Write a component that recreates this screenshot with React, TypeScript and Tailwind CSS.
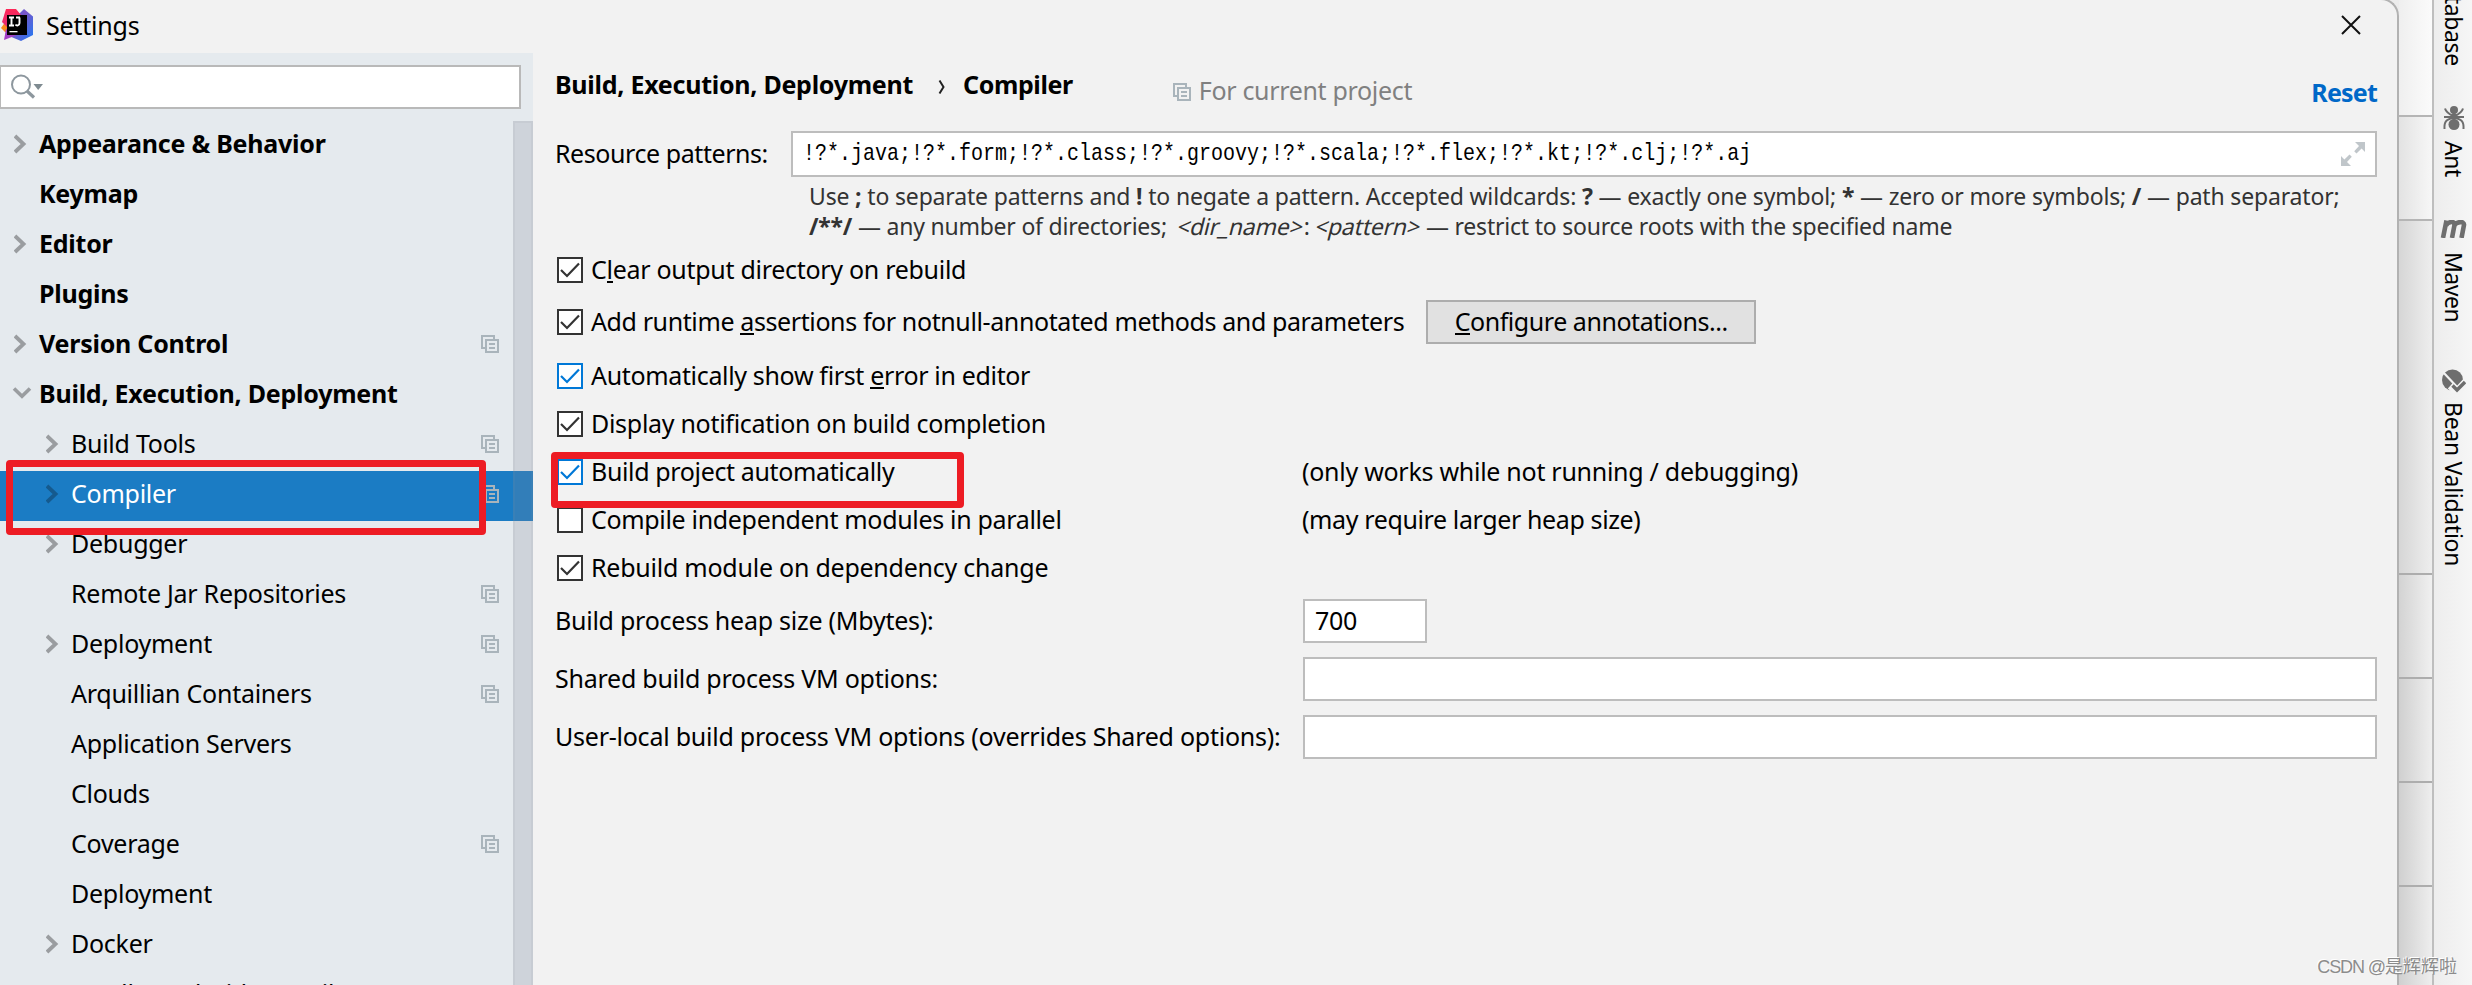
import type { ReactNode } from "react";

type TreeItem = {
  label: string;
  top?: boolean;
  arrow?: "right" | "down";
  project?: boolean;
  selected?: boolean;
};

const tree: TreeItem[] = [
  { label: "Appearance & Behavior", top: true, arrow: "right" },
  { label: "Keymap", top: true },
  { label: "Editor", top: true, arrow: "right" },
  { label: "Plugins", top: true },
  { label: "Version Control", top: true, arrow: "right", project: true },
  { label: "Build, Execution, Deployment", top: true, arrow: "down" },
  { label: "Build Tools", arrow: "right", project: true },
  { label: "Compiler", arrow: "right", project: true, selected: true },
  { label: "Debugger", arrow: "right" },
  { label: "Remote Jar Repositories", project: true },
  { label: "Deployment", arrow: "right", project: true },
  { label: "Arquillian Containers", project: true },
  { label: "Application Servers" },
  { label: "Clouds" },
  { label: "Coverage", project: true },
  { label: "Deployment" },
  { label: "Docker", arrow: "right" },
  { label: "Gradle-Android Compiler" },
];

function IdeaLogo() {
  return (
    <svg className="h-8 w-8" viewBox="0 0 32 32">
      <defs>
        <linearGradient id="blue" x1="0" y1="0" x2="1" y2="1">
          <stop offset="0" stopColor="#3f6df0" />
          <stop offset="0.4" stopColor="#7a55c8" />
          <stop offset="1" stopColor="#1c7bf5" />
        </linearGradient>
        <linearGradient id="pink" x1="0" y1="0" x2="0" y2="1">
          <stop offset="0" stopColor="#fe2857" />
          <stop offset="1" stopColor="#e02a7c" />
        </linearGradient>
      </defs>
      <path d="M23 0L32 7.500V26L20 32L8 27L17 6Z" fill="url(#blue)" />
      <path d="M0 19L5 12L8 24L4 23Z" fill="#fb8a1e" />
      <path d="M5 0H15L20 6L10 22L1 13Z" fill="url(#pink)" />
      <path d="M5 20L16 26L3 31Z" fill="#a33fc4" />
      <rect x="6" y="6" width="20" height="20" fill="#000" />
      <path d="M8 8.500H13M10.500 8.500V16M8 16.500H13M15 8.500H19M18.500 8.500V14C18.500 17 15.500 17 14.500 15.500" fill="none" stroke="#fff" strokeWidth="1.900" />
      <rect x="8.500" y="22" width="8" height="1.300" fill="#fff" />
    </svg>
  );
}

function ProjectIcon({ className }: { className?: string }) {
  return (
    <svg className={"h-[18px] w-[18px] shrink-0 " + (className ?? "")} viewBox="0 0 18 18" fill="none" stroke="#a9b4bb" strokeWidth="2">
      <path d="M4 13H1V1H13V4" />
      <path d="M5 5H17V17H5Z" />
      <path d="M8 9H14M8 13H14" />
    </svg>
  );
}

function Arrow({ dir, selected }: { dir?: "right" | "down"; selected?: boolean }) {
  if (dir === "down") {
    return (
      <svg className="-ml-0.5 -mt-[5px] h-5 w-5" viewBox="0 0 20 20" fill="none" stroke="#9a9da0" strokeWidth="3.600">
        <path d="M2 4.500L10 12.300L18 4.500" />
      </svg>
    );
  }
  if (dir === "right") {
    return (
      <svg className="-mt-[5px] h-5 w-4" viewBox="0 0 16 20" fill="none" stroke={selected ? "#155a8e" : "#9a9da0"} strokeWidth="3.800">
        <path d="M1 2L9.500 10L1 18" />
      </svg>
    );
  }
  return null;
}

function Sidebar() {
  return (
    <aside className="flex h-[932px] w-[533px] shrink-0 flex-col bg-[#e5eaee]">
      <div className="mt-3 flex h-[44px] w-[521px] shrink-0 items-center border-2 border-l border-[#b9b9b9] bg-white pl-2.5">
        <svg className="h-[26px] w-8" viewBox="0 0 32 26" fill="none">
          <circle cx="10" cy="10.500" r="9" stroke="#8d979e" strokeWidth="2" />
          <path d="M16 17L23 23.500" stroke="#8d979e" strokeWidth="3.200" />
          <path d="M22.500 10H32L27.200 16Z" fill="#7f8b91" />
        </svg>
      </div>
      <nav className="relative mt-3 flex flex-col">
        {tree.map((item, i) => (
          <div
            key={i}
            className={
              "flex h-[50px] shrink-0 items-center text-[25px] " +
              (item.selected ? "bg-[#1b7cc4] text-white " : "text-black ") +
              (item.top ? "pl-[14px] font-bold tracking-[-0.24px]" : "pl-[46px] tracking-[-0.26px]")
            }
          >
            <span className="flex w-[25px] shrink-0">
              <Arrow dir={item.arrow} selected={item.selected} />
            </span>
            <span className="-mt-1.5 grow whitespace-nowrap leading-[34px]">{item.label}</span>
            {item.project && <ProjectIcon className="-mt-1 mr-[34px]" />}
          </div>
        ))}
        <div className="absolute right-0 top-0 h-full w-5 border-2 border-b-0 border-[#8c919b]/10 bg-[#828796]/23" />
        <div className="absolute left-[6px] top-[339px] h-[75px] w-[480px] rounded-[4px] border-[7px] border-[#ed1c24]" />
      </nav>
    </aside>
  );
}

function CheckRow({ checked = true, blue, className, children }: { checked?: boolean; blue?: boolean; className: string; children: ReactNode }) {
  return (
    <div className={"flex shrink-0 items-center gap-2 pl-px " + className}>
      <span className={"flex h-[26px] w-[26px] shrink-0 items-center justify-center border-2 bg-white " + (blue ? "border-[#0078d7]" : "border-[#333333]")}>
        {checked && (
          <svg className="h-[22px] w-[22px]" viewBox="0 0 22 22" fill="none" stroke={blue ? "#0078d7" : "#333333"} strokeWidth="2.200">
            <path d="M2 11L8 17L20 4.500" />
          </svg>
        )}
      </span>
      {children}
    </div>
  );
}

function Label({ children, className = "tracking-[-0.29px]" }: { children: ReactNode; className?: string }) {
  return <span className={"-mt-0.5 whitespace-nowrap leading-[34px] " + className}>{children}</span>;
}

function Mnemonic({ children }: { children: ReactNode }) {
  return <span className="inline-block h-[31px] border-b-2 border-black align-top">{children}</span>;
}

function Main() {
  return (
    <main className="flex grow flex-col pl-[23px] text-[25px] text-black">
      <div className="flex h-[78px] shrink-0">
        <div className="mt-4 flex font-bold">
          <Label className="-ml-px w-[383px] tracking-[-0.26px]">Build, Execution, Deployment</Label>
          <svg className="mt-[10px] h-4 w-[8px]" viewBox="0 0 8 16" fill="none" stroke="#222" strokeWidth="2">
            <path d="M1.500 1.500L5.500 8L1.500 14.500" />
          </svg>
          <Label className="ml-[17px] tracking-[-0.38px]">Compiler</Label>
        </div>
        <div className="ml-[100px] mt-[22px] flex">
          <ProjectIcon className="mt-2" />
          <Label className="ml-[8px] tracking-[-0.33px] text-[#808080]">For current project</Label>
        </div>
        <div className="ml-auto mr-[20px] mt-[21px] font-bold text-[#0068c8]">
          <Label className="tracking-[-0.8px]">Reset</Label>
        </div>
      </div>

      <div className="flex h-[46px] shrink-0 items-center">
        <Label className="-ml-px w-[236px] tracking-[-0.43px]">Resource patterns:</Label>
        <div className="flex h-[46px] w-[1586px] items-center border-2 border-[#bdbdbd] bg-white pl-[10px] pr-2.5">
          <span className="grow origin-center scale-y-[1.22] whitespace-nowrap font-['Liberation_Mono',monospace] text-[20px] leading-none">
            !?*.java;!?*.form;!?*.class;!?*.groovy;!?*.scala;!?*.flex;!?*.kt;!?*.clj;!?*.aj
          </span>
          <svg className="h-6 w-6" viewBox="0 0 24 24" fill="#c0c6ca">
            <path d="M14 0H24V10L20.600 6.600L15.500 11.500L13.200 9.200L18 4Z" />
            <path d="M0 24V14L3.400 17.400L8.500 12.500L10.800 14.800L6 20L10 24Z" />
          </svg>
        </div>
      </div>

      <div className="h-[69px] shrink-0 pl-[253px] pt-[4px] text-[23px] leading-[30px] text-[#333333]">
        <p className="whitespace-nowrap tracking-[-0.17px]">
          Use <b>;</b> to separate patterns and <b>!</b> to negate a pattern. Accepted wildcards: <b>?</b> — exactly one symbol; <b>*</b> — zero or more symbols; <b>/</b> — path separator;
        </p>
        <p className="whitespace-nowrap tracking-[-0.22px]">
          <b>/**/</b> — any number of directories;&nbsp; <span className="inline-block -skew-x-[14deg]">&lt;dir_name&gt;</span>: <span className="inline-block -skew-x-[14deg]">&lt;pattern&gt;</span> — restrict to source roots with the specified name
        </p>
      </div>

      <CheckRow className="h-12">
        <Label>C<Mnemonic>l</Mnemonic>ear output directory on rebuild</Label>
      </CheckRow>
      <CheckRow className="h-14">
        <Label className="tracking-[-0.39px]">Add runtime <Mnemonic>a</Mnemonic>ssertions for notnull-annotated methods and parameters</Label>
        <button className="ml-[14px] flex h-[44px] w-[330px] items-center justify-center border-2 border-[#adadad] bg-[#e1e1e1]">
          <Label className="tracking-[-0.45px]"><Mnemonic>C</Mnemonic>onfigure annotations...</Label>
        </button>
      </CheckRow>
      <CheckRow blue className="h-[52px]">
        <Label className="tracking-[-0.34px]">Automatically show first <Mnemonic>e</Mnemonic>rror in editor</Label>
      </CheckRow>
      <CheckRow className="h-[44px]">
        <Label>Display notification on build completion</Label>
      </CheckRow>
      <div className="relative flex h-[52px] shrink-0 items-center">
        <CheckRow blue className="w-[746px]">
          <Label className="tracking-[-0.36px]">Build project automatically</Label>
        </CheckRow>
        <Label className="tracking-[-0.275px]">(only works while not running / debugging)</Label>
        <div className="absolute -left-[5px] top-[6px] z-10 h-[56px] w-[413px] rounded-[4px] border-[7px] border-[#ed1c24]" />
      </div>
      <div className="flex h-[44px] shrink-0 items-center">
        <CheckRow checked={false} className="w-[746px]">
          <Label className="tracking-[-0.33px]">Compile independent modules in parallel</Label>
        </CheckRow>
        <Label className="tracking-[-0.38px]">(may require larger heap size)</Label>
      </div>
      <CheckRow className="h-[52px]">
        <Label className="tracking-[-0.24px]">Rebuild module on dependency change</Label>
      </CheckRow>

      <div className="-ml-px mt-[5px] flex flex-col gap-[14px]">
        <div className="flex h-[44px] items-center">
          <Label className="w-[748px] tracking-[-0.25px]">Build process heap size (Mbytes):</Label>
          <div className="flex h-[44px] w-[124px] items-center border-2 border-[#bdbdbd] bg-white pl-[10px]">
            <Label>700</Label>
          </div>
        </div>
        <div className="flex h-[44px] items-center">
          <Label className="w-[748px] tracking-[-0.25px]">Shared build process VM options:</Label>
          <div className="h-[44px] w-[1074px] border-2 border-[#bdbdbd] bg-white" />
        </div>
        <div className="flex h-[44px] items-center">
          <Label className="w-[748px] tracking-[-0.24px]">User-local build process VM options (overrides Shared options):</Label>
          <div className="h-[44px] w-[1074px] border-2 border-[#bdbdbd] bg-white" />
        </div>
      </div>
    </main>
  );
}

function ToolStripe() {
  return (
    <div className="flex w-[38px] shrink-0 flex-col items-center bg-linear-to-r from-[#ededed] to-[#f6f6f6] pl-0.5 text-[23px] text-black">
      <div className="flex h-[66px] w-full shrink-0 flex-col items-center justify-end leading-[38px]">
        <span className="whitespace-nowrap tracking-[-0.4px] [writing-mode:vertical-rl]">Database</span>
      </div>
      <svg className="mt-[40px] h-6 w-[22px] shrink-0" viewBox="0 0 22 24" fill="#6e6e6e">
        <ellipse cx="11" cy="4" rx="4" ry="4" />
        <ellipse cx="11" cy="10.500" rx="3" ry="3.500" />
        <ellipse cx="11" cy="18.500" rx="5.500" ry="5.500" />
        <path d="M2 2.500C3 6 6 8 10 10M20 2.500C19 6 16 8 12 10M1 11H21M1.500 23C1 16 3 13.500 10 12M20.500 23C21 16 19 13.500 12 12" fill="none" stroke="#6e6e6e" strokeWidth="2" />
      </svg>
      <span className="mt-[11px] h-[38px] whitespace-nowrap leading-[38px] tracking-[-0.4px] [writing-mode:vertical-rl]">Ant</span>
      <svg className="mt-[41px] h-[18px] w-7 shrink-0" viewBox="0 0 28 18" fill="none" stroke="#6e6e6e" strokeWidth="4.600">
        <path d="M3 18L6.500 0.500M6 5.500C8 1.500 15 0.500 14.500 5L12 18M14 6C16 1.500 24.500 0.500 24 5L21.500 18" />
      </svg>
      <span className="mt-[14px] h-[72px] whitespace-nowrap leading-[38px] tracking-[-0.5px] [writing-mode:vertical-rl]">Maven</span>
      <svg className="mt-[45px] h-6 w-6 shrink-0" viewBox="0 0 24 24">
        <circle cx="10.500" cy="11" r="10.500" fill="#6e6e6e" />
        <path d="M1 3L16 19" stroke="#f3f3f3" strokeWidth="2.200" />
        <path d="M8.500 16.500L15 22.500L24 13" fill="none" stroke="#f3f3f3" strokeWidth="8" />
        <path d="M10.500 16.500L15 21L23 13" fill="none" stroke="#6e6e6e" strokeWidth="3.400" />
      </svg>
      <span className="mt-[9px] whitespace-nowrap leading-[38px] tracking-[-0.3px] [writing-mode:vertical-rl]">Bean Validation</span>
    </div>
  );
}

function EditorGutter() {
  return (
    <div className="flex w-[33px] shrink-0 flex-col">
      <div className="h-[117px] shrink-0 border-b-2 border-[#b5b5b5] bg-linear-to-r from-[#efefef] to-[#fbfbfb]" />
      <div className="h-[104px] shrink-0 border-b-2 border-[#b5b5b5] bg-linear-to-r from-[#e3e3e3] to-[#f7f7f7]" />
      <div className="h-[354px] shrink-0 border-b-2 border-[#adadad] bg-linear-to-r from-[#d6d6d6] to-[#eeeeee]" />
      <div className="h-[104px] shrink-0 border-b-2 border-[#adadad] bg-linear-to-r from-[#d3d3d3] to-[#f0f0f0]" />
      <div className="h-[104px] shrink-0 border-b-2 border-[#adadad] bg-linear-to-r from-[#d0d0d0] to-[#eeeeee]" />
      <div className="h-[104px] shrink-0 border-b-2 border-[#adadad] bg-linear-to-r from-[#d0d0d0] to-[#eeeeee]" />
      <div className="grow bg-linear-to-r from-[#d0d0d0] to-[#eeeeee]" />
    </div>
  );
}

export default function App() {
  return (
    <div className="relative flex h-[985px] w-[2472px] overflow-hidden bg-[#ececec] font-['Noto_Sans','Noto_Sans_CJK_SC',sans-serif]">
      <div className="-mt-0.5 flex h-[990px] w-[2399px] shrink-0 flex-col overflow-hidden rounded-tr-[18px] border-r-2 border-t-2 border-[#b2b2b2] bg-[#f2f2f2]">
        <header className="flex h-[53px] shrink-0 items-start">
          <div className="ml-px mt-[9px]">
            <IdeaLogo />
          </div>
          <span className="ml-[13px] mt-[8px] text-[25px] leading-[34px] tracking-[-0.2px] text-black">Settings</span>
          <svg className="ml-auto mr-[36px] mt-[15px] h-5 w-5" viewBox="0 0 20 20" stroke="#111" strokeWidth="2">
            <path d="M1 1L19 19M19 1L1 19" />
          </svg>
        </header>
        <div className="flex">
          <Sidebar />
          <Main />
        </div>
      </div>
      <EditorGutter />
      <div className="w-0.5 shrink-0 bg-[#bebebe]" />
      <ToolStripe />
      <div className="absolute right-[15px] top-[954px] whitespace-nowrap font-['Liberation_Sans','Noto_Sans_CJK_SC',sans-serif] text-[18px] leading-[26px] text-[#8c8c8c] [text-shadow:-1px_-1px_0_#fff]">
        <span className="tracking-[-1.1px]">CSDN @</span>是辉辉啦
      </div>
    </div>
  );
}
